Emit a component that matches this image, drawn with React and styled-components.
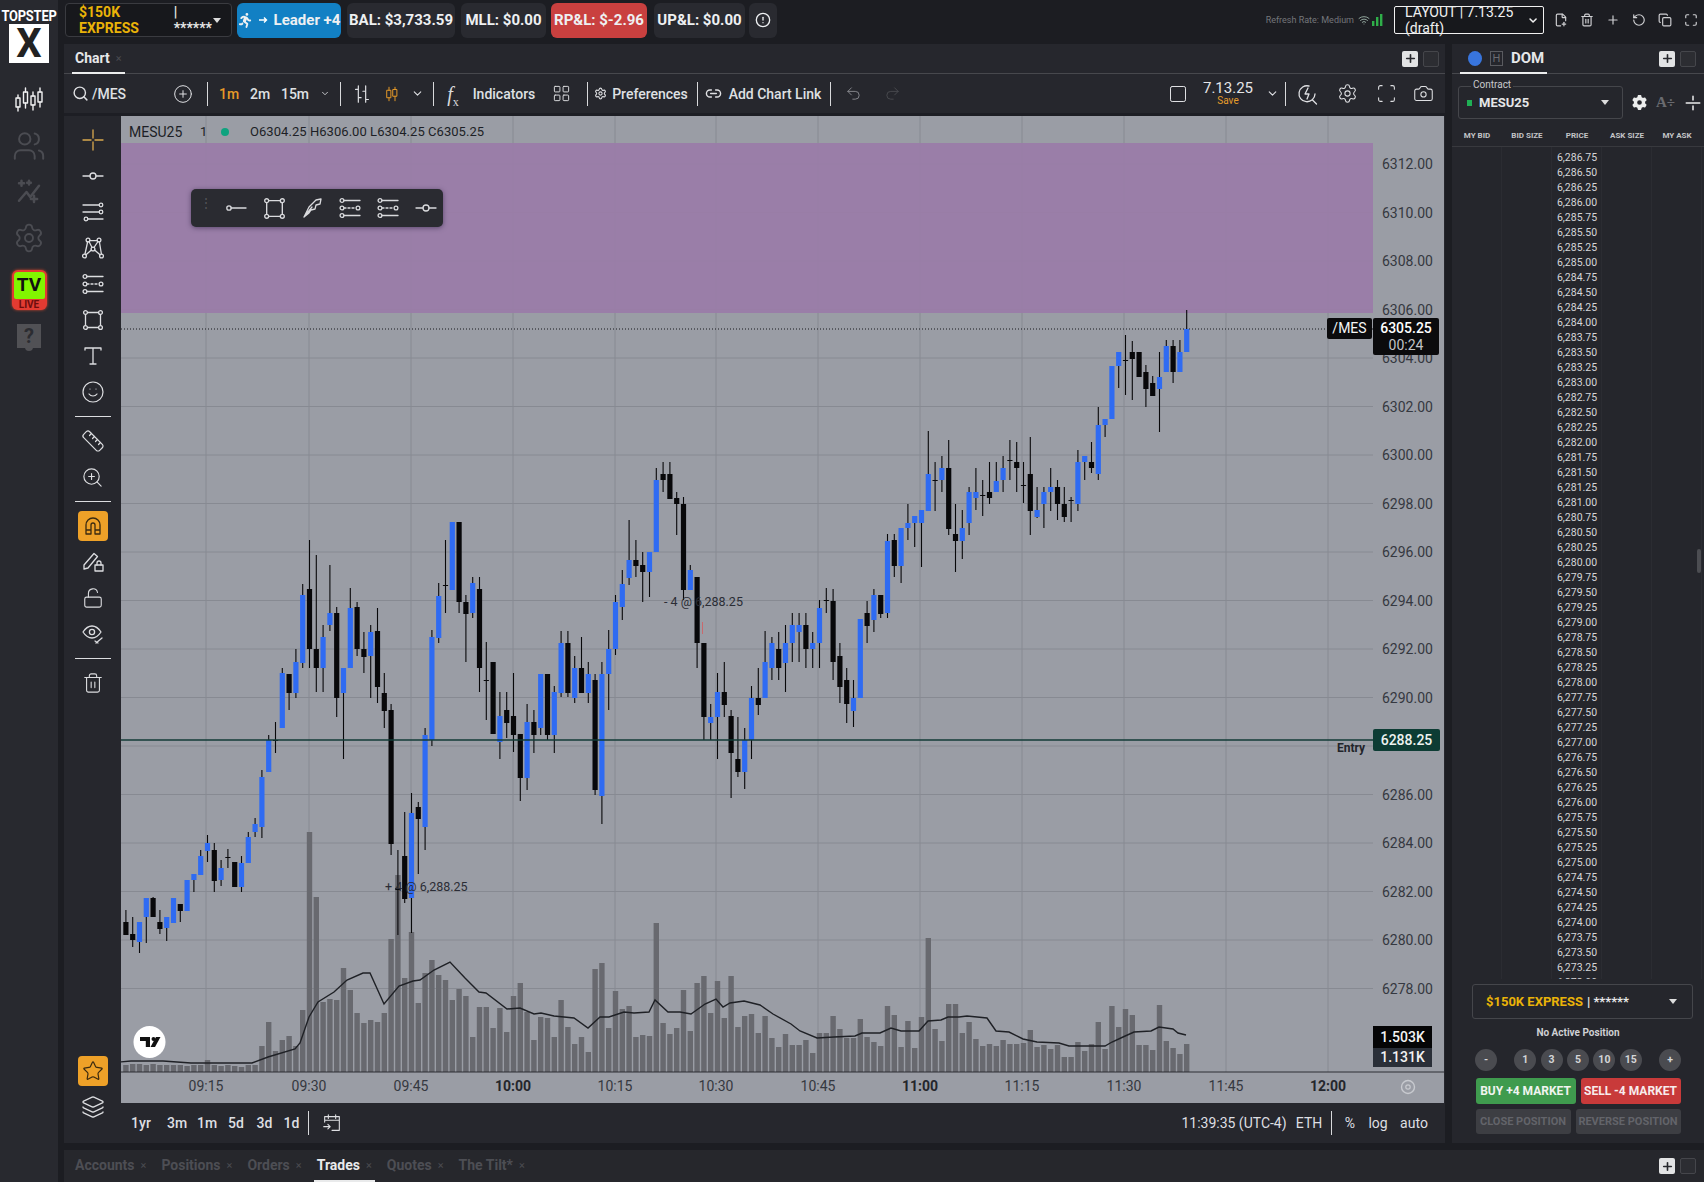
import React from "react";
import styled, { createGlobalStyle } from "styled-components";
import {
  Search, CirclePlus, ChevronDown, Undo2, Redo2, Settings, Scan, Camera, Square, LayoutGrid,
  Link2, Smile, Ruler, ZoomIn, LockOpen, Eye, Trash2, Star, Layers, Users, CircleAlert, Wifi,
  FilePlus2, Plus, RotateCcw, Copy, Maximize, Pencil, Lock,
} from "lucide-react";
import { FaPersonRunning, FaGear } from "react-icons/fa6";

const NARROW = `"Liberation Sans Narrow", "Roboto", sans-serif`;
const ROBOTO = `"Roboto", "Liberation Sans", sans-serif`;

const Global = createGlobalStyle`
  html, body { margin: 0; padding: 0; background: #1c1d22; }
  * { box-sizing: border-box; }
`;

/* ---------- data ---------- */
const CANDLES = `k922,935,910,935 k934,940,917,947 b922,942,922,953 b898,917,898,943 k898,917,897,917 k922,929,910,934 b917,928,917,941 b898,923,898,923 k904,911,904,922 b880,911,880,911 b874,880,874,892 b856,875,850,875 b843,851,835,862 k850,881,843,892 b868,880,860,886 k857,858,849,868 k862,887,862,887 b863,887,856,892 b837,863,832,863 b824,832,818,837 b777,827,770,838 b740,772,735,772 k740,741,722,753 b673,728,668,728 k674,693,674,710 b662,693,649,698 b595,663,584,668 k589,649,540,668 k649,668,555,692 b637,668,625,692 b613,625,565,631 k613,698,607,717 b668,693,668,759 b608,668,588,668 k607,649,602,656 k649,657,632,673 b632,656,625,698 k631,687,608,703 k693,711,673,728 k710,844,704,855 k888,890,850,935 k856,899,812,903 b813,898,793,933 k807,819,802,874 b735,827,728,850 b637,740,630,746 b596,638,583,643 k585,586,540,613 b522,590,522,590 k522,602,522,613 k602,614,595,662 b583,613,577,618 k589,668,577,692 k680,681,642,720 k662,734,662,734 b716,742,692,759 k710,723,692,738 k716,735,673,752 k734,778,734,801 b722,778,704,790 k722,735,710,753 b674,728,674,735 k674,735,674,740 b692,735,686,753 b643,693,631,697 k643,693,631,697 b668,698,656,703 k668,693,637,693 b674,693,662,703 k680,790,674,795 b674,796,662,824 b649,674,630,710 b602,649,595,655 b584,607,570,620 b560,578,520,585 k560,566,540,577 k565,572,552,602 b552,572,552,597 b480,552,468,552 k474,480,462,492 k474,499,462,499 k498,504,492,535 k504,590,497,600 b570,590,565,590 k577,643,577,668 k643,717,643,740 b717,723,704,740 b692,717,673,759 k692,705,662,717 k716,753,710,798 k759,772,717,777 b740,772,728,789 b698,740,686,759 k698,705,668,715 b662,698,631,698 b643,668,637,680 k649,668,632,680 b643,663,625,692 b625,643,613,662 b625,632,613,662 k625,649,613,668 b643,649,632,668 b608,643,600,668 k600,601,588,613 k601,662,589,680 k656,687,643,703 k680,704,668,723 b698,711,680,727 b619,698,619,698 k613,626,601,643 b595,620,589,632 k595,614,595,618 b541,613,534,618 k540,566,534,577 b528,566,528,583 b523,528,504,540 b516,523,516,547 b510,523,510,567 b474,511,431,511 k480,481,462,511 b468,480,456,492 k468,529,440,535 k534,541,504,572 b528,541,510,559 b492,523,487,535 b492,498,468,510 k495,496,480,516 k492,498,462,504 b481,492,462,492 b468,480,456,492 k460,461,440,480 k462,468,442,492 k485,486,462,503 k474,511,437,535 b510,517,487,518 b492,504,487,528 b487,492,468,511 k487,504,480,520 k504,517,487,522 k500,501,497,522 b462,504,450,511 b456,462,456,480 k462,468,442,473 b425,474,407,480 b419,425,419,437 b366,419,366,419 b352,366,352,388 k360,361,335,395 k352,359,341,400 k352,377,352,377 k372,389,365,407 k383,396,376,396 b377,389,352,432 b346,372,340,372 k346,372,340,383 b352,372,340,372 b329,352,310,352`
  .split(" ")
  .map((s) => {
    const [bt, bb, wt, wb] = s.slice(1).split(",").map(Number);
    return { up: s[0] === "b", bt, bb, wt, wb };
  });

const VOLUMES = [
  7, 8, 8, 7, 8, 7, 7, 7, 7, 6, 7, 7, 12, 7, 6, 7, 6, 5, 7, 7, 26, 50, 21, 32, 36, 26, 62,
  240, 175, 70, 73, 72, 104, 82, 59, 49, 52, 50, 59, 133, 197, 94, 140, 69, 99, 112, 97, 92, 72, 83, 76, 35, 65, 65, 44, 64, 40, 76, 89, 60, 32, 55, 54, 35, 72, 45, 28, 35, 20, 103, 109, 44, 81, 63, 66, 35, 37, 36, 149, 49, 38, 44,
  82, 41, 89, 96, 59, 91, 54, 96, 45, 56, 58, 39, 56, 34, 25, 38, 27, 27, 32, 19, 39, 39, 56, 43, 34, 34, 53, 35, 30, 26, 66, 57, 25, 51, 24, 55, 134, 43, 31, 68, 68, 39, 50, 33, 26, 28, 26, 32, 28, 28, 29, 42, 25, 27, 23, 27, 15, 15, 30, 21, 28, 50, 23, 66, 45, 63, 57, 27, 27, 22, 67, 31, 24, 18, 28,
];

const MA = "120,1062 131,1061 163,1061 191,1063 252,1063 268,1057 295,1049 300,1043 309,1017 318,1002 334,992 347,980 363,973 370,973 384,1004 399,986 413,981 420,980 434,970 450,962 465,978 479,992 486,993 507,1009 520,1008 534,1014 541,1013 554,1016 574,1018 588,1028 600,1017 609,1017 624,1012 634,1013 649,1012 655,1000 668,1012 680,1012 691,1014 705,1004 716,999 723,1007 730,1003 744,1001 760,1005 773,1014 791,1024 800,1031 817,1038 834,1037 855,1036 862,1033 880,1033 891,1028 901,1031 919,1031 928,1021 941,1020 948,1017 959,1017 967,1016 987,1018 996,1031 1009,1032 1023,1039 1037,1042 1059,1043 1069,1046 1105,1046 1112,1042 1123,1037 1134,1032 1151,1031 1159,1027 1173,1029 1178,1033 1186,1035";

const xOf = (k) => 309.5 + 6.8 * k;
const FIRST_K = -27;
const PRICE_LEVELS = Array.from({ length: 18 }, (_, i) => 6312 - i * 2);
const yOf = (p) => 164 + (6312 - p) * 24.25;
const TICKS = [
  ["09:15", 206], ["09:30", 309], ["09:45", 411], ["10:00", 513, true], ["10:15", 615], ["10:30", 716],
  ["10:45", 818], ["11:00", 920, true], ["11:15", 1022], ["11:30", 1124], ["11:45", 1226], ["12:00", 1328, true],
];
const DOM_PRICES = Array.from({ length: 56 }, (_, i) =>
  (6286.75 - i * 0.25).toLocaleString("en-US", { minimumFractionDigits: 2 })
);

/* ---------- page ---------- */
const Page = styled.div`
  width: 1704px; height: 1182px; display: flex; overflow: hidden; background: #1c1d22;
  font-family: ${ROBOTO}; color: #e4e5e8;
`;
const Rail = styled.aside`
  width: 58px; flex: none; background: #28292f; display: flex; flex-direction: column; align-items: center; padding-top: 8px;
`;
const LogoWord = styled.div`
  font: 700 14px/16px ${NARROW}; color: #fff; letter-spacing: -0.2px; height: 16px; transform: scaleX(0.92);
`;
const LogoBox = styled.div`
  width: 40px; height: 39px; background: #fff; color: #222; display: flex; align-items: center; justify-content: center;
  font: 700 40px/39px ${NARROW};
`;
const RailIcon = styled.div`
  width: 58px; height: 46px; display: flex; align-items: center; justify-content: center;
  color: ${(p) => (p.$dim ? "#4b4c52" : "#f1f1f2")};
`;
const RailIcons = styled.div`
  margin-top: 14px; display: flex; flex-direction: column; align-items: center;
`;
const TvBadge = styled.div`
  margin-top: 9px; width: 35px; height: 40px; border-radius: 6px; background: #e23b32; overflow: hidden;
  display: flex; flex-direction: column; align-items: stretch; box-shadow: 0 0 3px #d9482e;
`;
const TvTop = styled.div`
  height: 27px; margin: 2px 2px 0; border-radius: 4px 4px 2px 2px; background: #82f500; color: #111;
  font: 700 19px/26px ${NARROW}; text-align: center;
`;
const TvLive = styled.div`
  flex: 1; color: #6d0d0d; font: 700 10px/11px ${NARROW}; text-align: center;
`;
const HelpBadge = styled.div`
  margin-top: 14px; width: 24px; height: 24px; background: #515155; color: #2b2c31; font: 700 20px/24px ${ROBOTO};
  text-align: center; position: relative;
  &::after { content: ""; position: absolute; left: 8px; bottom: -3px; width: 8px; height: 4px; background: #515155; border-radius: 0 0 4px 4px; }
`;
const Main = styled.div`
  flex: 1; min-width: 0; display: flex; flex-direction: column;
`;

/* ---------- top bar ---------- */
const TopBar = styled.header`
  height: 40px; flex: none; background: #1c1d22; display: flex; align-items: center; padding-left: 7px;
`;
const AccountChip = styled.div`
  width: 167px; height: 34px; background: #17181c; border: 1px solid #3a3b40; border-radius: 4px;
  display: flex; align-items: center; padding-left: 13px; font: 700 14px ${NARROW}; position: relative;
`;
const Gold = styled.span` color: #eab308; `;
const Masked = styled.span` color: #e8e8e8; margin-left: 4px; `;
const Caret = styled.span`
  width: 0; height: 0; border-left: 4px solid transparent; border-right: 4px solid transparent; border-top: 5px solid ${(p) => p.$color || "#ddd"};
  margin-left: auto; margin-right: ${(p) => p.$right || 10}px;
`;
const Chip = styled.div`
  height: 35px; margin-left: ${(p) => p.$ml || 6}px; width: ${(p) => p.$w}px; border-radius: 6px; background: ${(p) => p.$bg || "#292a30"};
  color: #eef0f2; display: flex; align-items: center; justify-content: center; gap: 6px; font: 700 15px ${NARROW}; flex: none;
`;
const TopRight = styled.div`
  margin-left: auto; display: flex; align-items: center; color: #d5d6d9;
`;
const RefreshText = styled.span`
  font: 400 9px ${NARROW}; color: #74767b; margin-right: 4px;
`;
const LayoutSelect = styled.div`
  width: 150px; height: 28px; margin-left: 10px; margin-right: 4px; border: 1px solid #f1f1f1; background: #17181c; border-radius: 2px;
  display: flex; align-items: center; justify-content: space-between; padding: 0 4px 0 10px; font: 400 14px ${NARROW}; color: #f0f0f0;
`;
const TopAction = styled.div`
  width: 26px; height: 28px; display: flex; align-items: center; justify-content: center; color: #cfd0d3;
`;

/* ---------- workspace ---------- */
const Workspace = styled.div`
  flex: 1; min-height: 0; display: flex; padding: 4px 0 7px 6px; gap: 7px;
`;
const ChartPanel = styled.section`
  width: 1381px; flex: none; display: flex; flex-direction: column; background: #26272d;
`;
const TabRow = styled.div`
  height: 30px; flex: none; display: flex; align-items: stretch; padding-left: 8px; border-bottom: 1px solid #47484d; position: relative;
`;
const PanelTab = styled.div`
  display: flex; align-items: center; gap: 6px; padding: 0 3px; border-bottom: 2px solid ${(p) => (p.$active ? "#eceded" : "transparent")};
  margin-bottom: -1px; font: 700 14px ${NARROW}; color: #e6e7e9; min-width: 48px;
`;
const TabClose = styled.span` color: #4a4b50; font: 400 11px ${ROBOTO}; `;
const TabTools = styled.div`
  margin-left: auto; display: flex; align-items: center; gap: 5px; padding-right: ${(p) => p.$pr || 6}px;
`;
const PlusBox = styled.div`
  width: 16px; height: 16px; border-radius: 2px; background: #e2e3e4; color: #26272c; display: flex; align-items: center; justify-content: center;
`;
const EmptyBox = styled.div`
  width: 16px; height: 16px; border-radius: 2px; border: 1px solid #45464b; background: #2c2d32;
`;
const Toolbar = styled.div`
  height: 42px; flex: none; display: flex; align-items: center; border-bottom: 3px solid #1d1e24; padding: 0 5px 0 8px;
  font: 500 14px ${ROBOTO}; color: #dfe0e3;
`;
const Cell = styled.div`
  width: ${(p) => p.$w}px; flex: none; display: flex; align-items: center; justify-content: ${(p) => p.$align || "center"}; gap: 3px;
  color: ${(p) => p.$color || "inherit"}; white-space: nowrap;
`;
const Sep = styled.div`
  width: 1px; height: 24px; background: #d8d9db; flex: none; margin-left: ${(p) => p.$ml || 0}px;
`;
const Spacer = styled.div` flex: 1; `;
const FxMark = styled.span`
  font: italic 400 20px/20px "Liberation Serif", serif; color: #d8d9dc;
  sub { font-size: 12px; font-style: normal; line-height: 0; }
`;
const LayoutName = styled.div`
  display: flex; flex-direction: column; align-items: center; font: 400 15px/15px ${ROBOTO}; color: #e4e5e7;
`;
const SaveNote = styled.span`
  font: 400 10px/10px ${ROBOTO}; color: #e49c2b;
`;
const ChartBody = styled.div`
  flex: 1; min-height: 0; display: flex;
`;
const DrawTools = styled.nav`
  width: 57px; flex: none; display: flex; flex-direction: column; align-items: center; padding: 6px 0 18px; color: #dcdde0;
`;
const DrawButton = styled.div`
  width: 36px; height: 36px; flex: none; display: flex; align-items: center; justify-content: center;
  color: ${(p) => p.$color || "inherit"};
`;
const ActiveSquare = styled.div`
  width: 30px; height: 30px; border-radius: 4px; background: #eea128; color: #3a2a10; display: flex; align-items: center; justify-content: center;
`;
const DrawSep = styled.div`
  width: 36px; height: 1px; flex: none; background: #dcdde0; margin: 6px 0;
`;
const PushDown = styled.div` margin-top: auto; `;
const ChartColumn = styled.div`
  width: 1323px; flex: none; display: flex; flex-direction: column;
`;
const ChartFrame = styled.div`
  height: 987px; flex: none; position: relative; overflow: hidden; background: #9a9da5;
  svg { display: block; }
`;
const Legend = styled.div`
  position: absolute; left: 8px; top: 8px; display: flex; align-items: center; font: 400 13px/16px ${ROBOTO}; color: #1d1f26;
`;
const LegendSymbol = styled.span` font-size: 14px; width: 71px; `;
const LegendInterval = styled.span` width: 21px; `;
const LegendDot = styled.span`
  width: 8px; height: 8px; border-radius: 50%; background: #0fa37f; margin-right: 21px;
`;
const LegendValues = styled.span` letter-spacing: 0.05px; `;
const Palette = styled.div`
  position: absolute; left: 70px; top: 73px; width: 252px; height: 38px; background: #2a2b31; border-radius: 5px;
  box-shadow: 0 1px 5px rgba(40, 30, 60, 0.55); display: flex; align-items: center; padding-left: 9px; color: #d9dadd;
`;
const Grip = styled.span` width: 6px; height: 14px; color: #56575c; font: 400 12px/5px ${ROBOTO}; margin-right: 11px; white-space: pre-line; `;
const PaletteItem = styled.div`
  width: 38px; display: flex; align-items: center; justify-content: center; flex: none;
`;
const SymbolTag = styled.div`
  position: absolute; left: 1206px; top: 202px; width: 45px; height: 21px; background: #0b0b0d; color: #f5f5f5; border-radius: 2px;
  font: 400 14px/21px ${ROBOTO}; text-align: center;
`;
const PriceTag = styled.div`
  position: absolute; left: 1252px; top: 202px; width: 66px; height: 37px; background: #0b0b0d; border-radius: 2px; text-align: center;
  font: 500 14px/17px ${ROBOTO}; color: #fff; padding-top: 2px;
`;
const Countdown = styled.div` color: #c3c4c7; font-weight: 400; `;
const EntryTag = styled.div`
  position: absolute; left: 1252px; top: 613px; width: 67px; height: 22px; background: #0d3c34; color: #eef3f1; border-radius: 2px;
  font: 500 14px/22px ${ROBOTO}; text-align: center;
`;
const EntryText = styled.div`
  position: absolute; left: 1216px; top: 625px; font: 700 12px/14px ${ROBOTO}; color: #22242a;
`;
const VolumeTag = styled.div`
  position: absolute; left: 1252px; top: ${(p) => p.$top}px; width: 59px; height: ${(p) => p.$h}px; background: ${(p) => p.$bg};
  color: #f2f2f3; font: 500 14px/${(p) => p.$h}px ${ROBOTO}; text-align: center;
`;
const TradeNote = styled.div`
  position: absolute; left: ${(p) => p.$x}px; top: ${(p) => p.$y}px; font: 400 12.5px/16px ${ROBOTO}; color: #2b2d35;
`;
const CollapseMark = styled.div`
  position: absolute; left: -11px; top: 950px; color: #babbbf; font: 400 14px ${ROBOTO};
`;
const RangeBar = styled.div`
  height: 40px; flex: none; display: flex; align-items: center; font: 500 14px ${ROBOTO}; color: #dedfe2; padding-right: 4px;
`;
const RangeItem = styled.div`
  width: ${(p) => p.$w}px; flex: none; text-align: center; white-space: nowrap; display: flex; justify-content: center; font-weight: ${(p) => p.$weight || 500};
`;

/* ---------- DOM panel ---------- */
const DomPanel = styled.section`
  flex: 1; min-width: 0; display: flex; flex-direction: column; background: #25262c; position: relative;
`;
const DomTabRow = styled(TabRow)` padding-left: 8px; `;
const DomTab = styled(PanelTab)` min-width: 87px; gap: 8px; padding: 0 0 0 8px; font-size: 15px; `;
const BlueDot = styled.span` width: 14px; height: 15px; border-radius: 50%; background: #3875dd; `;
const HBox = styled.span`
  width: 13px; height: 15px; border: 1px solid #5a5b60; color: #6b6c71; font: 400 11px/13px ${ROBOTO}; text-align: center;
`;
const ContractRow = styled.div`
  height: 49px; flex: none; display: flex; align-items: flex-start; padding: 12px 0 0 6px;
`;
const ContractField = styled.div`
  width: 165px; height: 33px; border: 1px solid #45464b; border-radius: 3px; position: relative; display: flex; align-items: center; padding-left: 8px;
  font: 700 13px ${NARROW}; color: #e5e6e8;
`;
const ContractLabel = styled.span`
  position: absolute; left: 12px; top: -8px; background: #25262c; padding: 0 2px; font: 400 10px/12px ${NARROW}; color: #c9cacc;
`;
const ContractDot = styled.span`
  width: 5px; height: 6px; background: #1faf54; margin-right: 7px;
`;
const ContractTools = styled.div`
  display: flex; align-items: center; height: 33px; margin-left: 9px; gap: 9px; color: #eceded;
`;
const FontSizer = styled.span`
  font: 700 15px "Liberation Serif", serif; color: #6a6b70;
`;
const DomHeader = styled.div`
  height: 22px; flex: none; display: grid; grid-template-columns: repeat(5, 50px); align-items: center; border-bottom: 1px solid #38393e;
  font: 700 8px ${NARROW}; color: #c3c4c7; text-align: center; margin-top: 2px;
`;
const DomList = styled.div`
  flex: 1; min-height: 0; overflow: hidden; padding-top: 3px;
  background: repeating-linear-gradient(to right, transparent 0 49px, #2b2c32 49px 50px);
`;
const DomRow = styled.div`
  height: 15px; display: grid; grid-template-columns: repeat(5, 50px);
`;
const DomPrice = styled.span`
  grid-column: 3; text-align: center; font: 400 10.5px/15px ${NARROW}; color: #d5d6d9;
`;
const ScrollThumb = styled.div`
  position: absolute; right: 3px; top: 505px; width: 4px; height: 24px; background: #4c4d52; border-radius: 2px;
`;
const OrderPanel = styled.div`
  height: 164px; flex: none; display: flex; flex-direction: column; align-items: center; padding-top: 5px; background: #25262c;
`;
const OrderAccount = styled.div`
  width: 221px; height: 35px; flex: none; border: 1px solid #45464b; border-radius: 3px; display: flex; align-items: center; padding-left: 13px;
  font: 700 13px ${NARROW}; margin-left: 9px;
`;
const NoPosition = styled.div`
  margin-top: 7px; height: 14px; font: 700 10px/14px ${NARROW}; color: #cfd0d3;
`;
const QtyRow = styled.div`
  width: 206px; margin-top: 9px; height: 22px; display: flex; justify-content: space-between; align-items: center;
`;
const QtyGroup = styled.div` display: flex; gap: 4.4px; `;
const QtyButton = styled.div`
  width: 22px; height: 22px; border-radius: 50%; background: #4a4b50; color: #d4d5d7; font: 700 10.5px/22px ${NARROW}; text-align: center;
`;
const ActionRow = styled.div`
  width: 205px; display: flex; gap: 5px; margin-top: ${(p) => p.$mt}px; height: ${(p) => p.$h}px;
`;
const ActionButton = styled.div`
  width: ${(p) => p.$w}px; border-radius: 3px; background: ${(p) => p.$bg}; color: ${(p) => p.$color}; flex: none;
  font: 700 ${(p) => p.$size}px/${(p) => p.$h}px ${NARROW}; text-align: center; white-space: nowrap;
`;

/* ---------- bottom panel ---------- */
const BottomPanel = styled.footer`
  height: 32px; flex: none; margin-left: 6px; background: #26272c; display: flex; align-items: stretch; padding-left: 8px;
`;
const BottomTabs = styled.div` display: flex; gap: 9px; `;
const BottomTab = styled.div`
  display: flex; align-items: center; gap: 6px; padding: 0 3px; font: 700 14px ${NARROW};
  color: ${(p) => (p.$active ? "#e9eaeb" : "#4d4e54")}; border-bottom: 2px solid ${(p) => (p.$active ? "#e9eaeb" : "transparent")};
`;

/* ---------- icons ---------- */
const Ico = ({ s = 24, w = 1.3, children, vb = "0 0 24 24" }) => (
  <svg width={s} height={s} viewBox={vb} fill="none" stroke="currentColor" strokeWidth={w} strokeLinecap="round" strokeLinejoin="round">
    {children}
  </svg>
);
const LineNode = (p) => (<Ico {...p}><path d="M2 12h7M15 12h7" /><circle cx="12" cy="12" r="3" /></Ico>);
const LineEnd = (p) => (<Ico {...p}><circle cx="5" cy="12" r="2.2" /><path d="M7 12h15" /></Ico>);
const Crosshair = (p) => (<Ico {...p}><path d="M12 2v8M12 14v8M2 12h8M14 12h8" /></Ico>);
const ThreeLines = (p) => (<Ico {...p}><path d="M2 5h16M2 12h16M7 19h15" /><circle cx="20" cy="5" r="1.8" /><circle cx="20" cy="12" r="1.8" /><circle cx="5" cy="19" r="1.8" /></Ico>);
const Network = (p) => (<Ico {...p}><circle cx="7" cy="4" r="1.9" /><circle cx="18" cy="4" r="1.9" /><circle cx="12" cy="13" r="1.9" /><circle cx="3.5" cy="20" r="1.9" /><circle cx="20.5" cy="20" r="1.9" /><path d="M8.6 4.6h7.6M6.6 6 4 18M18.4 6l2 12M8 5.5l3 6M17 5.5l-4 6M10.4 14 5 18.8M13.6 14 19 18.8" /></Ico>);
const Channel = (p) => (<Ico {...p}><circle cx="4" cy="4.5" r="1.9" /><path d="M6 4.5h16" /><circle cx="4" cy="12" r="1.9" /><circle cx="20" cy="12" r="1.9" /><path d="M6 12h12" strokeDasharray="2 2" /><circle cx="4" cy="19.5" r="1.9" /><path d="M6 19.5h16" /></Ico>);
const RectNodes = (p) => (<Ico {...p}><rect x="4.5" y="4.5" width="15" height="15" /><circle cx="4.5" cy="4.5" r="1.9" fill="#2a2b31" /><circle cx="19.5" cy="4.5" r="1.9" fill="#2a2b31" /><circle cx="4.5" cy="19.5" r="1.9" fill="#2a2b31" /><circle cx="19.5" cy="19.5" r="1.9" fill="#2a2b31" /></Ico>);
const Brushy = (p) => (<Ico {...p}><path d="M4 21 9 11l7-7 5-1-1 5-4 1-1 4-4 1-2 3zM4 21l8-10" /></Ico>);
const SerifT = (p) => (<Ico {...p}><path d="M4 6V4h16v2M12 4v16M9 20h6" /></Ico>);
const Magnet = (p) => (<Ico {...p}><path d="M5 20V11a7 7 0 0 1 14 0v9h-5v-9a2 2 0 0 0-4 0v9zM5 16h5M14 16h5" /></Ico>);
const PencilLock = () => (
  <Ico><path d="M3 15 13 3.5l3.5 3L7 18l-4 1z" /><rect x="14" y="15" width="8" height="6" /><path d="M16 15v-2a2 2 0 0 1 4 0v2" /></Ico>
);
const EyePen = () => (
  <Ico><path d="M2 10s4-6 9-6 9 6 9 6-4 6-9 6-9-6-9-6z" /><circle cx="11" cy="10" r="2.6" /><path d="m15 21 6-5M14 19l3 2" /></Ico>
);
const CandleRail = () => (
  <Ico s={32} w={1.4} vb="0 0 32 32">
    <path d="M5 11v3M5 23v4M12.5 4v4M12.5 19v5M20 8v4M20 21v5M27 4v4M27 18v5" />
    <rect x="3" y="14" width="4" height="9" /><rect x="10.5" y="8" width="4" height="11" /><rect x="18" y="12" width="4" height="9" /><rect x="25" y="8" width="4" height="10" />
  </Ico>
);
const SparkChart = () => (
  <Ico s={30} w={2}><path d="M4 19 10 12l3 4 7-9" /><path d="M6 3v4M4 5h4M12 3v3M10.5 4.5h3M16 15v5M13.5 17.5h5" /></Ico>
);
const OhlcBars = () => (
  <Ico s={22}><path d="M8 3v18M8 7H5M8 16h3M16 3v18M16 9h-3M16 18h3" /></Ico>
);
const CandleIcon = () => (
  <Ico s={22}><path d="M8 3v4M8 17v4M16 3v3M16 15v6" /><rect x="5.5" y="7" width="5" height="10" /><rect x="13.5" y="6" width="5" height="9" /></Ico>
);
const BoltZoom = () => (
  <Ico s={24}><path d="M20 12a8 8 0 1 1-6-8M17.5 18l4 4M13 6l-3 6h4l-2 5" /></Ico>
);
const Bars = () => (
  <svg width="14" height="14" viewBox="0 0 14 14" fill="#2fae49"><rect x="2" y="8" width="2.4" height="5" /><rect x="6" y="4" width="2.4" height="9" /><rect x="10" y="1" width="2.4" height="12" /></svg>
);
const RunArrow = () => (
  <svg width="9" height="8" viewBox="0 0 9 8" fill="none" stroke="#fff" strokeWidth="1.4"><path d="M0 4h7M5 1.5 7.5 4 5 6.5" /></svg>
);
const Divide = () => (
  <Ico s={18} w={2}><path d="M3 12h18M12 3v5M12 16v5" /></Ico>
);

/* ---------- chart ---------- */
const AxisLabel = styled.text`
  font: ${(p) => (p.$bold ? 700 : 400)} 14px ${ROBOTO}; fill: ${(p) => (p.$bold ? "#24262c" : "#353840")};
`;
const ChartSvg = () => (
  <svg width="1323" height="987" viewBox="121 116 1323 987">
    {TICKS.map(([t, x]) => (<line key={t} x1={x} x2={x} y1="116" y2="1072" stroke="#878a92" strokeWidth="1" />))}
    {PRICE_LEVELS.map((p) => (<line key={p} x1="121" x2="1373" y1={yOf(p)} y2={yOf(p)} stroke="#878a92" strokeWidth="1" />))}
    <rect x="121" y="143" width="1252" height="170" fill="#9a7ca8" opacity="0.92" />
    {VOLUMES.map((h, i) => (<rect key={i} x={xOf(FIRST_K + i) - 2.7} y={1072 - h} width="5.4" height={h} fill="#68696f" />))}
    <polyline points={MA} fill="none" stroke="#1f2126" strokeWidth="1.4" />
    <line x1="121" x2="1373" y1="329" y2="329" stroke="#17181c" strokeWidth="1" strokeDasharray="1 2" />
    {CANDLES.map((c, i) => {
      const x = xOf(FIRST_K + i);
      const col = c.up ? "#2f6bf2" : "#08080a";
      return (
        <g key={i}>
          <line x1={x} x2={x} y1={c.wt} y2={c.wb} stroke="#08080a" strokeWidth="1.1" />
          <rect x={x - 2.6} y={c.bt} width="5.2" height={c.bb - c.bt} fill={col} />
        </g>
      );
    })}
    <line x1="121" x2="1373" y1="740" y2="740" stroke="#123b37" strokeWidth="1.6" />
    <line x1="702.5" x2="702.5" y1="622" y2="634" stroke="#c9696d" strokeWidth="1" />
    <line x1="121" x2="1444" y1="1072" y2="1072" stroke="#2d2f35" strokeWidth="1" />
    {PRICE_LEVELS.map((p) => (<AxisLabel key={p} x="1382" y={yOf(p) + 5}>{p.toFixed(2)}</AxisLabel>))}
    {TICKS.map(([t, x, b]) => (<AxisLabel key={t} x={x} y="1091" textAnchor="middle" $bold={b}>{t}</AxisLabel>))}
    <circle cx="1408" cy="1087" r="6.5" fill="none" stroke="#c8cacf" strokeWidth="1.4" />
    <circle cx="1408" cy="1087" r="2.2" fill="none" stroke="#c8cacf" strokeWidth="1.2" />
    <circle cx="149.5" cy="1042" r="16" fill="#fff" />
    <path d="M140 1037h10v10h-4.2v-6H140z" fill="#111" />
    <circle cx="153.5" cy="1039" r="2" fill="#111" />
    <path d="M160.5 1037 155 1047h-4.5l5.5-10z" fill="#111" />
  </svg>
);

const Tool = ({ children, color }) => <DrawButton $color={color}>{children}</DrawButton>;

export default function App() {
  return (
    <Page>
      <Global />
      <Rail>
        <LogoWord>TOPSTEP</LogoWord>
        <LogoBox>X</LogoBox>
        <RailIcons>
          <RailIcon><CandleRail /></RailIcon>
          <RailIcon $dim><Users size={34} strokeWidth={1.4} /></RailIcon>
          <RailIcon $dim><SparkChart /></RailIcon>
          <RailIcon $dim><Settings size={32} strokeWidth={1.4} /></RailIcon>
        </RailIcons>
        <TvBadge><TvTop>TV</TvTop><TvLive>LIVE</TvLive></TvBadge>
        <HelpBadge>?</HelpBadge>
      </Rail>
      <Main>
        <TopBar>
          <AccountChip><Gold>$150K EXPRESS</Gold><Masked>| ******</Masked><Caret /></AccountChip>
          <Chip $w={104} $ml={5} $bg="#1280c4"><FaPersonRunning size={15} /><RunArrow />Leader +4</Chip>
          <Chip $w={108}>BAL: $3,733.59</Chip>
          <Chip $w={85}>MLL: $0.00</Chip>
          <Chip $w={96} $ml={5} $bg="#c9403f">RP&amp;L: $-2.96</Chip>
          <Chip $w={91} $ml={7}>UP&amp;L: $0.00</Chip>
          <Chip $w={28} $ml={4}><CircleAlert size={16} /></Chip>
          <TopRight>
            <RefreshText>Refresh Rate: Medium</RefreshText>
            <Wifi size={12} color="#8fa39a" />
            <Bars />
            <LayoutSelect>LAYOUT | 7.13.25 (draft)<ChevronDown size={15} strokeWidth={3} /></LayoutSelect>
            <TopAction><FilePlus2 size={14} /></TopAction>
            <TopAction><Trash2 size={14} /></TopAction>
            <TopAction><Plus size={14} /></TopAction>
            <TopAction><RotateCcw size={14} /></TopAction>
            <TopAction><Copy size={14} /></TopAction>
            <TopAction><Maximize size={14} /></TopAction>
          </TopRight>
        </TopBar>
        <Workspace>
          <ChartPanel>
            <TabRow>
              <PanelTab $active>Chart <TabClose>×</TabClose></PanelTab>
              <TabTools><PlusBox><Plus size={13} strokeWidth={3} /></PlusBox><EmptyBox /></TabTools>
            </TabRow>
            <Toolbar>
              <Cell $w={100} $align="flex-start"><Search size={17} /> /MES</Cell>
              <Cell $w={22}><CirclePlus size={20} strokeWidth={1.2} /></Cell>
              <Sep $ml={13} />
              <Cell $w={42} $color="#e69a28">1m</Cell>
              <Cell $w={20}>2m</Cell>
              <Cell $w={50}>15m</Cell>
              <Cell $w={10}><ChevronDown size={13} /></Cell>
              <Sep $ml={10} />
              <Cell $w={42}><OhlcBars /></Cell>
              <Cell $w={18} $color="#e69a28"><CandleIcon /></Cell>
              <Cell $w={32}><ChevronDown size={13} /></Cell>
              <Sep />
              <Cell $w={38}><FxMark>f<sub>x</sub></FxMark></Cell>
              <Cell $w={64}>Indicators</Cell>
              <Cell $w={51}><LayoutGrid size={19} strokeWidth={1.2} /></Cell>
              <Sep />
              <Cell $w={24}><Settings size={13} /></Cell>
              <Cell $w={76}>Preferences</Cell>
              <Cell $w={9} />
              <Sep />
              <Cell $w={30}><Link2 size={17} /></Cell>
              <Cell $w={94}>Add Chart Link</Cell>
              <Sep $ml={8} />
              <Cell $w={44} $color="#8c8d92"><Undo2 size={17} strokeWidth={1.3} /></Cell>
              <Cell $w={34} $color="#4a4b50"><Redo2 size={17} strokeWidth={1.3} /></Cell>
              <Spacer />
              <Cell $w={38}><Square size={20} strokeWidth={1.2} /></Cell>
              <Cell $w={62}><LayoutName>7.13.25<SaveNote>Save</SaveNote></LayoutName></Cell>
              <Cell $w={26}><ChevronDown size={13} /></Cell>
              <Sep />
              <Cell $w={42}><BoltZoom /></Cell>
              <Cell $w={38}><Settings size={21} strokeWidth={1.2} /></Cell>
              <Cell $w={40}><Scan size={21} strokeWidth={1.2} /></Cell>
              <Cell $w={34}><Camera size={21} strokeWidth={1.2} /></Cell>
            </Toolbar>
            <ChartBody>
              <DrawTools>
                <Tool color="#d9a94e"><Crosshair /></Tool>
                <Tool><LineNode /></Tool>
                <Tool><ThreeLines /></Tool>
                <Tool><Network /></Tool>
                <Tool><Channel /></Tool>
                <Tool><RectNodes /></Tool>
                <Tool><SerifT /></Tool>
                <Tool><Smile size={24} strokeWidth={1.2} /></Tool>
                <DrawSep />
                <Tool><Ruler size={24} strokeWidth={1.2} /></Tool>
                <Tool><ZoomIn size={23} strokeWidth={1.2} /></Tool>
                <DrawSep />
                <Tool><ActiveSquare><Magnet /></ActiveSquare></Tool>
                <Tool><PencilLock /></Tool>
                <Tool><LockOpen size={22} strokeWidth={1.2} /></Tool>
                <Tool><EyePen /></Tool>
                <DrawSep />
                <Tool><Trash2 size={22} strokeWidth={1.2} /></Tool>
                <PushDown />
                <Tool><ActiveSquare><Star size={22} strokeWidth={1.3} /></ActiveSquare></Tool>
                <Tool><Layers size={24} strokeWidth={1.3} /></Tool>
              </DrawTools>
              <ChartColumn>
                <ChartFrame>
                  <ChartSvg />
                  <Legend>
                    <LegendSymbol>MESU25</LegendSymbol>
                    <LegendInterval>1</LegendInterval>
                    <LegendDot />
                    <LegendValues>O6304.25 H6306.00 L6304.25 C6305.25</LegendValues>
                  </Legend>
                  <Palette>
                    <Grip>{"⋮"}</Grip>
                    <PaletteItem><LineEnd /></PaletteItem>
                    <PaletteItem><RectNodes s={25} /></PaletteItem>
                    <PaletteItem><Brushy /></PaletteItem>
                    <PaletteItem><Channel /></PaletteItem>
                    <PaletteItem><Channel /></PaletteItem>
                    <PaletteItem><LineNode /></PaletteItem>
                  </Palette>
                  <SymbolTag>/MES</SymbolTag>
                  <PriceTag>6305.25<Countdown>00:24</Countdown></PriceTag>
                  <EntryTag>6288.25</EntryTag>
                  <EntryText>Entry</EntryText>
                  <VolumeTag $top={910} $h={22} $bg="#050506">1.503K</VolumeTag>
                  <VolumeTag $top={932} $h={19} $bg="#2a2f38">1.131K</VolumeTag>
                  <TradeNote $x={543} $y={478}>- 4 @ 6,288.25</TradeNote>
                  <TradeNote $x={264} $y={763}>+ 4 @ 6,288.25</TradeNote>
                </ChartFrame>
                <RangeBar>
                  <RangeItem $w={40}>1yr</RangeItem>
                  <RangeItem $w={32}>3m</RangeItem>
                  <RangeItem $w={28}>1m</RangeItem>
                  <RangeItem $w={30}>5d</RangeItem>
                  <RangeItem $w={27}>3d</RangeItem>
                  <RangeItem $w={27}>1d</RangeItem>
                  <Sep $ml={3} />
                  <RangeItem $w={46}><Ico s={22} w={1.2}><path d="M4 11V5h16v15h-8M4 9h16M8 3v4M16 3v4M3 16h7M7.5 13.5 10 16l-2.5 2.5" /></Ico></RangeItem>
                  <Spacer />
                  <RangeItem $w={120} $weight={400}>11:39:35 (UTC-4)</RangeItem>
                  <RangeItem $w={30} $weight={400}>ETH</RangeItem>
                  <Sep $ml={7} />
                  <RangeItem $w={36} $weight={400}>%</RangeItem>
                  <RangeItem $w={20} $weight={400}>log</RangeItem>
                  <RangeItem $w={52} $weight={400}>auto</RangeItem>
                </RangeBar>
              </ChartColumn>
            </ChartBody>
          </ChartPanel>
          <DomPanel>
            <DomTabRow>
              <DomTab $active><BlueDot /><HBox>H</HBox>DOM</DomTab>
              <TabTools $pr={8}><PlusBox><Plus size={13} strokeWidth={3} /></PlusBox><EmptyBox /></TabTools>
            </DomTabRow>
            <ContractRow>
              <ContractField>
                <ContractLabel>Contract</ContractLabel>
                <ContractDot />MESU25<Caret $right={13} />
              </ContractField>
              <ContractTools><FaGear size={15} /><FontSizer>A÷</FontSizer><Divide /></ContractTools>
            </ContractRow>
            <DomHeader>
              <span>MY BID</span><span>BID SIZE</span><span>PRICE</span><span>ASK SIZE</span><span>MY ASK</span>
            </DomHeader>
            <DomList>
              {DOM_PRICES.map((p) => (<DomRow key={p}><DomPrice>{p}</DomPrice></DomRow>))}
            </DomList>
            <ScrollThumb />
            <OrderPanel>
              <OrderAccount><Gold>$150K EXPRESS</Gold><Masked>| ******</Masked><Caret $right={15} /></OrderAccount>
              <NoPosition>No Active Position</NoPosition>
              <QtyRow>
                <QtyButton>-</QtyButton>
                <QtyGroup>
                  <QtyButton>1</QtyButton><QtyButton>3</QtyButton><QtyButton>5</QtyButton><QtyButton>10</QtyButton><QtyButton>15</QtyButton>
                </QtyGroup>
                <QtyButton>+</QtyButton>
              </QtyRow>
              <ActionRow $mt={7} $h={26}>
                <ActionButton $w={100} $h={26} $size={12} $bg="#3f9b4e" $color="#f0f4f0">BUY +4 MARKET</ActionButton>
                <ActionButton $w={100} $h={26} $size={12} $bg="#c83a3a" $color="#f7ecec">SELL -4 MARKET</ActionButton>
              </ActionRow>
              <ActionRow $mt={5} $h={25}>
                <ActionButton $w={95} $h={25} $size={11} $bg="#3d3e43" $color="#63646a">CLOSE POSITION</ActionButton>
                <ActionButton $w={105} $h={25} $size={11} $bg="#3d3e43" $color="#63646a">REVERSE POSITION</ActionButton>
              </ActionRow>
            </OrderPanel>
          </DomPanel>
        </Workspace>
        <BottomPanel>
          <BottomTabs>
            <BottomTab>Accounts <TabClose>×</TabClose></BottomTab>
            <BottomTab>Positions <TabClose>×</TabClose></BottomTab>
            <BottomTab>Orders <TabClose>×</TabClose></BottomTab>
            <BottomTab $active>Trades <TabClose>×</TabClose></BottomTab>
            <BottomTab>Quotes <TabClose>×</TabClose></BottomTab>
            <BottomTab>The Tilt* <TabClose>×</TabClose></BottomTab>
          </BottomTabs>
          <TabTools $pr={8}><PlusBox><Plus size={13} strokeWidth={3} /></PlusBox><EmptyBox /></TabTools>
        </BottomPanel>
      </Main>
    </Page>
  );
}
